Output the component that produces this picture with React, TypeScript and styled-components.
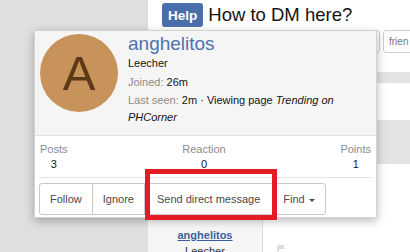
import React from 'react'
import styled, { createGlobalStyle } from 'styled-components'

const GlobalStyle = createGlobalStyle`
	html, body {
		margin: 0;
		padding: 0;
		background: #fff;
		font-family: 'Liberation Sans', Arial, sans-serif;
	}
`

const Page = styled.div`
	position: relative;
	width: 410px;
	height: 252px;
	overflow: hidden;
	display: grid;
	grid-template-columns: 148px 262px;
`

const Sidebar = styled.div`
	background: #dfdfdf;
`

const Main = styled.div`
	display: flex;
	flex-direction: column;
	background: #fff;
	overflow: hidden;

	& > * {
		flex-shrink: 0;
	}
`

const TitleRow = styled.div`
	display: flex;
	align-items: center;
	gap: 5px;
	height: 24px;
	padding: 3px 0 0 14px;
`

const Badge = styled.span`
	display: inline-flex;
	align-items: center;
	height: 24px;
	padding: 0 6px;
	border-radius: 3px;
	background: #4a6ea9;
	color: #fff;
	font-size: 13.5px;
	font-weight: bold;
`

const Title = styled.h1`
	margin: 0;
	font-size: 18.5px;
	font-weight: normal;
	color: #141414;
`

const ToolRow = styled.div`
	display: flex;
	gap: 3px;
	margin-top: 3px;
	padding-left: 172px;
	height: 23px;
`

const Field = styled.div`
	flex: none;
	width: 60px;
	height: 23px;
	border: 1px solid #d0d0d0;
	border-radius: 3px;
	color: #777;
	font-size: 10px;
	line-height: 21px;
	padding-left: 5px;
	box-sizing: border-box;
`

const Band = styled.div<{ $h: number; $gap: number }>`
	height: ${p => p.$h}px;
	margin-top: ${p => p.$gap}px;
	background: #e3e3e3;
`

const Message = styled.div`
	flex: 1;
	display: grid;
	grid-template-columns: 115px 1fr;
`

const UserCell = styled.div`
	background: #f6f6f6;
	border-right: 1px solid #dcdcdc;
	padding-top: 63px;
	text-align: center;
	font-size: 11px;
	line-height: 16px;
`

const UserLink = styled.a`
	display: block;
	color: #3a5f9e;
	font-weight: bold;
	text-decoration: underline;
`

const UserTitle = styled.div`
	color: #333;
`

const PostBody = styled.div`
	padding: 77px 0 0 14px;
`

const Card = styled.div`
	position: absolute;
	left: 34px;
	top: 30px;
	width: 343px;
	height: 188px;
	box-sizing: border-box;
	border: 1px solid #d3d3d3;
	background: #fff;
	box-shadow: 0 3px 9px rgba(0, 0, 0, 0.28);
	font-size: 11px;
	color: #141414;
`

const Header = styled.div`
	display: flex;
	gap: 10px;
	height: 101px;
	padding: 3px 5px 0;
	background: #f5f5f5;
	border-bottom: 1px solid #e2e2e2;
`

const Avatar = styled.div`
	flex: none;
	width: 78px;
	height: 78px;
	border-radius: 50%;
	background: #c8935b;
	color: #5b3816;
	font-size: 49px;
	line-height: 78px;
	text-align: center;
`

const Info = styled.div`
	display: flex;
	flex-direction: column;
	line-height: 17px;
	padding-right: 6px;
`

const Name = styled.a`
	font-size: 19px;
	line-height: 20px;
	color: #4d72ad;
`

const InfoLine = styled.div<{ $gap: number }>`
	margin-top: ${p => p.$gap}px;
`

const Muted = styled.span`
	color: #8c8c8c;
`

const Stats = styled.dl`
	display: flex;
	justify-content: space-between;
	margin: 0 4px;
	padding: 6px 1px 5px;
	border-bottom: 1px solid #e2e2e2;
	line-height: 15px;
`

const Stat = styled.div`
	display: flex;
	flex-direction: column;
	align-items: center;
	dt {
		color: #8c8c8c;
	}
	dd {
		margin: 0;
		color: #141414;
	}
`

const Actions = styled.div`
	display: flex;
	padding: 5px 4px 0;
`

const Button = styled.button<{ $first?: boolean; $last?: boolean; $pad?: number }>`
	display: inline-flex;
	align-items: center;
	gap: 4px;
	height: 32px;
	padding: 0 ${p => p.$pad ?? 10}px;
	margin-left: ${p => (p.$first ? 0 : -1)}px;
	background: #fff;
	border: 1px solid #c9c9c9;
	border-radius: ${p => (p.$first ? '3px 0 0 3px' : p.$last ? '0 3px 3px 0' : '0')};
	font-family: inherit;
	font-size: 11px;
	color: #4a4a4a;
`

const Caret = styled.span`
	width: 0;
	height: 0;
	border-left: 3px solid transparent;
	border-right: 3px solid transparent;
	border-top: 3.5px solid #4a4a4a;
	margin-top: 2px;
`

const Highlight = styled.div`
	position: absolute;
	left: 145px;
	top: 169px;
	width: 132px;
	height: 51px;
	box-sizing: border-box;
	border: 5px solid #e31b24;
`

const FlagIcon = () => (
	<svg width="9" height="11" viewBox="0 0 9 11">
		<path d="M1 0.5v10" stroke="#cfcfcf" strokeWidth="1.2" />
		<path d="M1.5 1h6.5l-1.5 2 1.5 2h-6.5z" fill="#dcdcdc" />
	</svg>
)

export default function App() {
	return (
		<>
			<GlobalStyle />
			<Page>
				<Sidebar />
				<Main>
					<TitleRow>
						<Badge>Help</Badge>
						<Title>How to DM here?</Title>
					</TitleRow>
					<ToolRow>
						<Field />
						<Field>frien</Field>
					</ToolRow>
					<Band $h={11} $gap={19} />
					<Band $h={44} $gap={37} />
					<Message>
						<UserCell>
							<UserLink>anghelitos</UserLink>
							<UserTitle>Leecher</UserTitle>
						</UserCell>
						<PostBody>
							<FlagIcon />
						</PostBody>
					</Message>
				</Main>

				<Card>
					<Header>
						<Avatar>A</Avatar>
						<Info>
							<Name>anghelitos</Name>
							<InfoLine $gap={1}>Leecher</InfoLine>
							<InfoLine $gap={2}>
								<Muted>Joined:</Muted> 26m
							</InfoLine>
							<InfoLine $gap={1}>
								<Muted>Last seen:</Muted> 2m · Viewing page <i>Trending on</i>
								<br />
								<i>PHCorner</i>
							</InfoLine>
						</Info>
					</Header>
					<Stats>
						<Stat>
							<dt>Posts</dt>
							<dd>3</dd>
						</Stat>
						<Stat>
							<dt>Reaction</dt>
							<dd>0</dd>
						</Stat>
						<Stat>
							<dt>Points</dt>
							<dd>1</dd>
						</Stat>
					</Stats>
					<Actions>
						<Button $first>Follow</Button>
						<Button>Ignore</Button>
						<Button $pad={12}>Send direct message</Button>
						<Button $last>
							Find <Caret />
						</Button>
					</Actions>
				</Card>
				<Highlight />
			</Page>
		</>
	)
}
